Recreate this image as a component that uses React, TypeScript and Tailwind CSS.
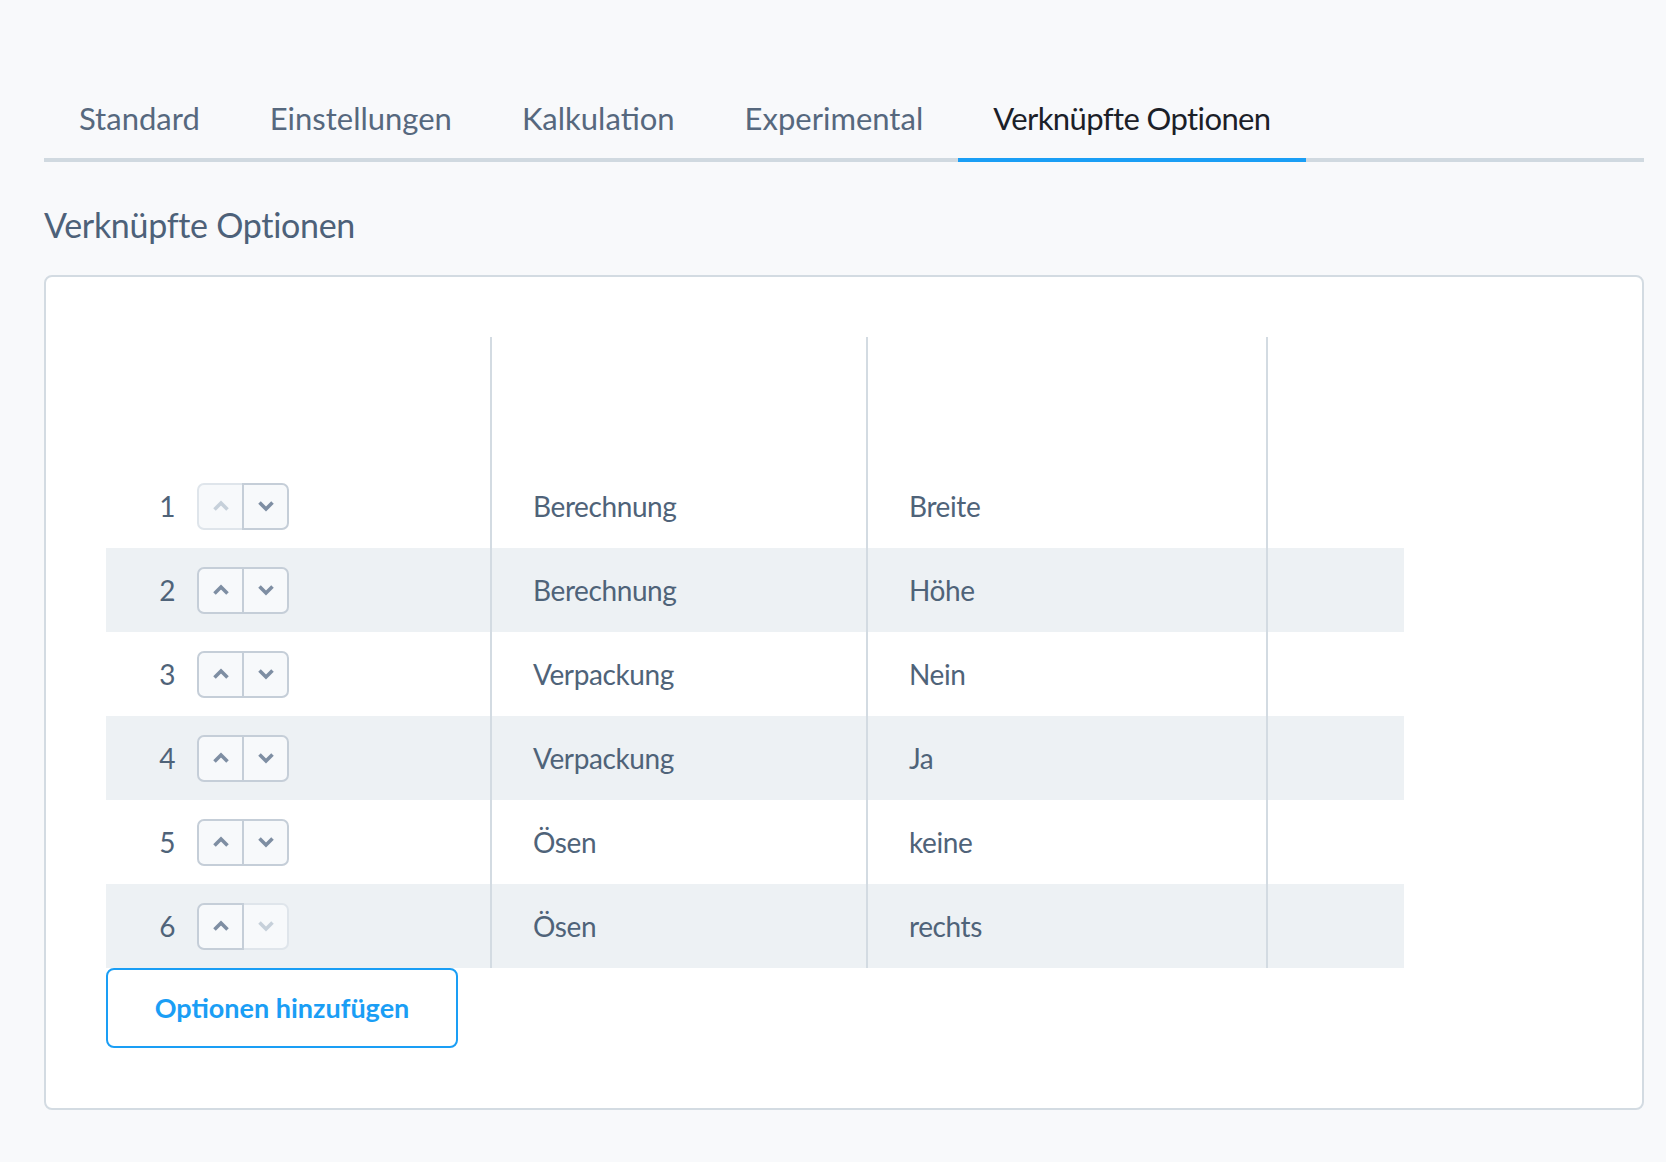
import { useState } from 'react';

const tabs = ['Standard', 'Einstellungen', 'Kalkulation', 'Experimental', 'Verknüpfte Optionen'];

const rows = [
  { group: 'Berechnung', value: 'Breite' },
  { group: 'Berechnung', value: 'Höhe' },
  { group: 'Verpackung', value: 'Nein' },
  { group: 'Verpackung', value: 'Ja' },
  { group: 'Ösen', value: 'keine' },
  { group: 'Ösen', value: 'rechts' },
];

function Chevron({ up }: { up?: boolean }) {
  return (
    <svg width="18" height="12" viewBox="0 0 18 12" fill="none">
      <path
        d={up ? 'M2.5 9.5 L9 3 L15.5 9.5' : 'M2.5 2.5 L9 9 L15.5 2.5'}
        stroke="currentColor"
        strokeWidth="3.6"
      />
    </svg>
  );
}

function SortButtons({ first, last }: { first: boolean; last: boolean }) {
  const on = 'z-10 border-[#c5ced8] text-[#7e8ea3]';
  const off = 'z-0 border-[#dfe5eb] text-[#c6d0da]';
  return (
    <div className="flex">
      <button
        disabled={first}
        className={`relative flex h-[47px] w-[47px] items-center justify-center rounded-l-[7px] border-2 bg-[#f7f9fb] ${first ? off : on}`}
      >
        <Chevron up />
      </button>
      <button
        disabled={last}
        className={`relative -ml-[2px] flex h-[47px] w-[47px] items-center justify-center rounded-r-[7px] border-2 bg-[#f7f9fb] ${last ? off : on}`}
      >
        <Chevron />
      </button>
    </div>
  );
}

export default function App() {
  const [active, setActive] = useState(4);

  return (
    <main className="min-h-screen bg-[#f8f9fb] pl-[44px] pr-[22px] pt-[18px] pb-[53px] font-['Lato',sans-serif]">
      <div className="flex border-b-4 border-[#d0d9e0]">
        {tabs.map((t, i) => (
          <button
            key={t}
            onClick={() => setActive(i)}
            className={`-mb-[4px] border-b-4 px-[35px] pb-[20px] pt-[80px] text-[31px] leading-[40px] ${
              i === active ? 'border-[#1a9ef5] tracking-[-0.6px] text-[#1b2028]' : 'border-transparent text-[#56687e]'
            }`}
          >
            {t}
          </button>
        ))}
      </div>

      <h2 className="mt-[43px] text-[34px] leading-[40px] tracking-[-0.3px] text-[#4d6179]">Verknüpfte Optionen</h2>

      <div className="mt-[30px] rounded-[8px] border-2 border-[#d3dbe2] bg-white p-[60px]">
        <div className="w-[1298px] text-[28px] tracking-[-0.4px] text-[#4f6379]">
          <div className="flex h-[127px]">
            <div className="w-[384px]" />
            <div className="w-[376px] border-l-2 border-[#d3dbe2]" />
            <div className="w-[400px] border-l-2 border-[#d3dbe2]" />
            <div className="w-[138px] border-l-2 border-[#d3dbe2]" />
          </div>
          {rows.map((r, i) => (
            <div key={i} className={`flex h-[84px] ${i % 2 === 1 ? 'bg-[#edf1f4]' : ''}`}>
              <div className="flex w-[384px] items-center">
                <span className="w-[69px] text-right">{i + 1}</span>
                <div className="ml-[22px]">
                  <SortButtons first={i === 0} last={i === rows.length - 1} />
                </div>
              </div>
              <div className="flex w-[376px] items-center border-l-2 border-[#d3dbe2] pl-[41px]">{r.group}</div>
              <div className="flex w-[400px] items-center border-l-2 border-[#d3dbe2] pl-[41px]">{r.value}</div>
              <div className="w-[138px] border-l-2 border-[#d3dbe2]" />
            </div>
          ))}
        </div>
        <button className="h-[80px] w-[352px] rounded-[8px] border-2 border-[#1a9ef5] bg-white text-[27px] font-bold text-[#1a9ef5]">
          Optionen hinzufügen
        </button>
      </div>
    </main>
  );
}
